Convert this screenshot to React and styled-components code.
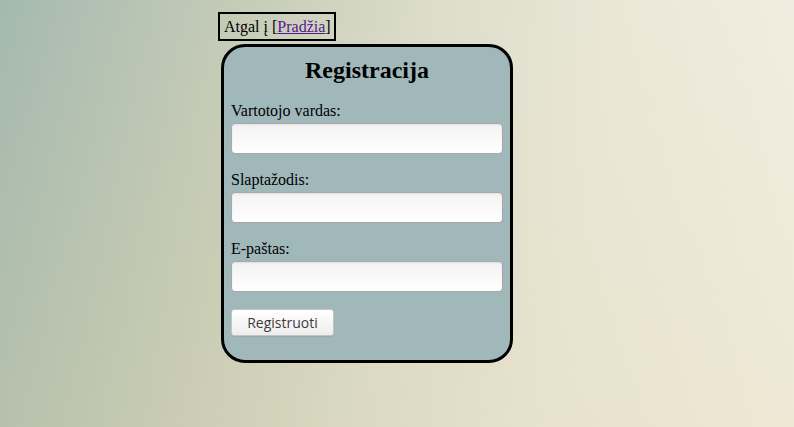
import React from 'react';
import styled, { createGlobalStyle } from 'styled-components';

const GlobalStyle = createGlobalStyle`
  html, body {
    margin: 0;
    padding: 0;
    height: 100%;
  }
  body {
    font-family: "Liberation Serif", "Times New Roman", serif;
    color: #000;
    background:
      linear-gradient(to bottom, rgba(255, 250, 235, 0) 0%, rgba(215, 200, 150, 0.18) 100%),
      linear-gradient(100deg, #a4b9af 0%, #c6ccb8 28%, #dcddcb 50%, #ebe8d8 72%, #f3efe3 100%);
  }
  #root {
    min-height: 100%;
  }
`;

const Page = styled.div`
  min-height: 427px;
  padding: 12px 0 0 218px;
  box-sizing: border-box;
`;

const BackBox = styled.div`
  display: inline-block;
  border: 2px solid #000;
  padding: 2px 3px 2px 4px;
  font-size: 16px;
  line-height: 21px;
  a {
    color: #551a8b;
  }
`;

const Card = styled.form`
  width: 292px;
  box-sizing: border-box;
  margin: 3px 0 0 3px;
  border: 3px solid #000;
  border-radius: 24px;
  background: #a1b8ba;
  padding: 10px 7px 24px;
`;

const Title = styled.h2`
  margin: 0 0 18px;
  text-align: center;
  font-size: 24px;
  font-weight: bold;
`;

const Field = styled.div`
  display: flex;
  flex-direction: column;
  gap: 3px;
  margin-bottom: 17px;
`;

const Label = styled.label`
  font-size: 16px;
  line-height: 18px;
`;

const Input = styled.input`
  height: 31px;
  box-sizing: border-box;
  width: 100%;
  border: 1px solid #a8a8a8;
  border-radius: 4px;
  background: linear-gradient(to bottom, #f3f3f3 0%, #ffffff 100%);
  box-shadow: inset 0 1px 2px rgba(0, 0, 0, 0.08);
  padding: 0 6px;
  font-size: 14px;
  outline: none;
`;

const Button = styled.button`
  height: 27px;
  width: 103px;
  box-sizing: border-box;
  border: 1px solid #c4c4c4;
  border-radius: 3px;
  background: linear-gradient(to bottom, #ffffff 0%, #ededed 100%);
  box-shadow: 0 1px 1px rgba(0, 0, 0, 0.08);
  color: #3c3c3c;
  font-family: "Open Sans", "DejaVu Sans", sans-serif;
  font-size: 14px;
  padding: 0;
`;

const App = () => {
  return (
    <>
      <GlobalStyle />
      <Page>
        <BackBox>
          Atgal į [<a href="#">Pradžia</a>]
        </BackBox>
        <Card onSubmit={e => e.preventDefault()}>
          <Title>Registracija</Title>
          <Field>
            <Label>Vartotojo vardas:</Label>
            <Input type="text" />
          </Field>
          <Field>
            <Label>Slaptažodis:</Label>
            <Input type="password" />
          </Field>
          <Field>
            <Label>E-paštas:</Label>
            <Input type="email" />
          </Field>
          <Button type="submit">Registruoti</Button>
        </Card>
      </Page>
    </>
  );
};

export default App;
